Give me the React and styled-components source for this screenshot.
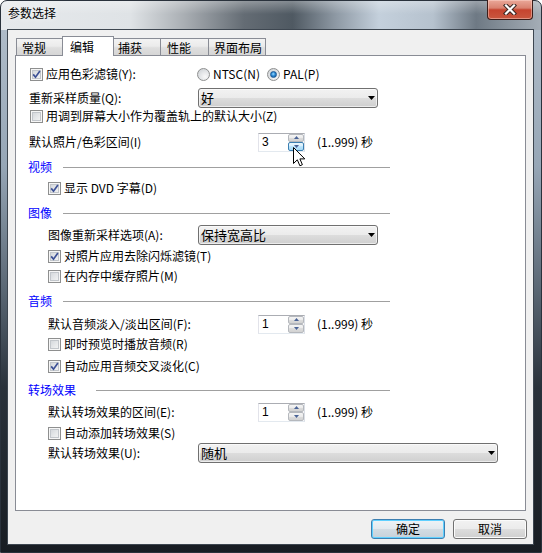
import styled, { createGlobalStyle } from "styled-components";

const GlobalStyle = createGlobalStyle`
  html, body {
    margin: 0;
    padding: 0;
    background: #ffffff;
  }

  body {
    font-family: "Noto Sans CJK SC", "Liberation Sans", sans-serif;
    font-size: 12px;
    color: #000000;
  }
`;

function CloseIcon() {
  return (
    <svg width="14" height="11" viewBox="0 0 14 11">
      <path d="M3 1.5 L11 9.5 M11 1.5 L3 9.5" stroke="#3a2622" strokeWidth="4.2" strokeLinecap="square" />
      <path d="M3 1.5 L11 9.5 M11 1.5 L3 9.5" stroke="#ffffff" strokeWidth="2.2" strokeLinecap="square" />
    </svg>
  );
}

function CheckIcon() {
  return (
    <svg width="9" height="9" viewBox="0 0 9 9">
      <path d="M1.2 4.4 L3.5 7.2 L7.9 1" fill="none" stroke="#3d5196" strokeWidth="1.7" />
    </svg>
  );
}

function ArrowDown() {
  return (
    <svg width="7" height="4" viewBox="0 0 7 4">
      <polygon points="0,0 7,0 3.5,4" fill="#000000" />
    </svg>
  );
}

function SpinArrow({ up }) {
  return (
    <svg width="5" height="3" viewBox="0 0 5 3">
      <polygon points={up ? "0,3 5,3 2.5,0" : "0,0 5,0 2.5,3"} fill="#4a6396" />
    </svg>
  );
}

function Cursor() {
  return (
    <StyledCursor width="13" height="20" viewBox="0 0 13 20">
      <path
        d="M0.5 0.5 V16.5 L4.3 12.8 L6.9 18.8 L9.4 17.7 L6.9 11.9 H11.8 Z"
        fill="#ffffff"
        stroke="#000000"
        strokeWidth="1"
      />
    </StyledCursor>
  );
}

function CheckItem({ checked, indent = 0, children }) {
  return (
    <StyledCheckItem $indent={indent}>
      <StyledBox>{checked && <CheckIcon />}</StyledBox>
      <span>{children}</span>
    </StyledCheckItem>
  );
}

function Radio({ checked, children }) {
  return (
    <StyledRadioOption>
      <StyledRadio $checked={checked} />
      <span>{children}</span>
    </StyledRadioOption>
  );
}

function Select({ width, children }) {
  return (
    <StyledSelect $width={width}>
      <span>{children}</span>
      <ArrowDown />
    </StyledSelect>
  );
}

function Spin({ value, hover }) {
  return (
    <StyledSpinWrap>
      <StyledSpin>
        <StyledSpinValue>{value}</StyledSpinValue>
        <StyledSpinButtons>
          <StyledSpinButton><SpinArrow up /></StyledSpinButton>
          <StyledSpinButton $hover={hover}><SpinArrow /></StyledSpinButton>
        </StyledSpinButtons>
        {hover && <Cursor />}
      </StyledSpin>
      <StyledRange>(1..999) 秒</StyledRange>
    </StyledSpinWrap>
  );
}

function Section({ title, gap, mt }) {
  return (
    <StyledSection $mt={mt}>
      <span>{title}</span>
      <StyledSectionLine $gap={gap} />
    </StyledSection>
  );
}

export default function App() {
  return (
    <>
      <GlobalStyle />
      <StyledWindow>
        <StyledTitleBar>
          <StyledTitle>参数选择</StyledTitle>
          <StyledCloseButton>
            <CloseIcon />
          </StyledCloseButton>
        </StyledTitleBar>

        <StyledClient>
          <StyledTabStrip>
            <StyledTab $width={47} $pad={5}>常规</StyledTab>
            <StyledTab $width={52} $pad={7} $active>编辑</StyledTab>
            <StyledTab $width={48} $pad={4}>捕获</StyledTab>
            <StyledTab $width={49} $pad={6}>性能</StyledTab>
            <StyledTab $width={58} $pad={5}>界面布局</StyledTab>
          </StyledTabStrip>

          <StyledPanel>
            <StyledFieldRow>
              <CheckItem checked>应用色彩滤镜(Y):</CheckItem>
              <StyledRadioGroup>
                <Radio>NTSC(N)</Radio>
                <Radio checked>PAL(P)</Radio>
              </StyledRadioGroup>
            </StyledFieldRow>
            <StyledFieldRow $h={20} $mt={6}>
              <StyledLabel>重新采样质量(Q):</StyledLabel>
              <Select width={180}>好</Select>
            </StyledFieldRow>
            <StyledCheckRow>
              <CheckItem>用调到屏幕大小作为覆盖轨上的默认大小(Z)</CheckItem>
            </StyledCheckRow>
            <StyledFieldRow $h={20} $mt={8}>
              <StyledLabel>默认照片/色彩区间(I)</StyledLabel>
              <Spin value="3" hover />
            </StyledFieldRow>

            <Section title="视频" gap={11} mt={7} />
            <StyledCheckRow $mt={5}>
              <CheckItem checked indent={18}>显示 DVD 字幕(D)</CheckItem>
            </StyledCheckRow>

            <Section title="图像" gap={11} mt={9} />
            <StyledFieldRow $h={20} $mt={4}>
              <StyledLabel $indent={19}>图像重新采样选项(A):</StyledLabel>
              <Select width={180}>保持宽高比</Select>
            </StyledFieldRow>
            <StyledCheckRow $mt={3}>
              <CheckItem checked indent={18}>对照片应用去除闪烁滤镜(T)</CheckItem>
            </StyledCheckRow>
            <StyledCheckRow $mt={4}>
              <CheckItem indent={18}>在内存中缓存照片(M)</CheckItem>
            </StyledCheckRow>

            <Section title="音频" gap={11} mt={9} />
            <StyledFieldRow $h={20} $mt={5}>
              <StyledLabel $indent={19}>默认音频淡入/淡出区间(F):</StyledLabel>
              <Spin value="1" />
            </StyledFieldRow>
            <StyledCheckRow $mt={2}>
              <CheckItem indent={18}>即时预览时播放音频(R)</CheckItem>
            </StyledCheckRow>
            <StyledCheckRow $mt={6}>
              <CheckItem checked indent={18}>自动应用音频交叉淡化(C)</CheckItem>
            </StyledCheckRow>

            <Section title="转场效果" gap={20} mt={8} />
            <StyledFieldRow $h={20} $mt={4}>
              <StyledLabel $indent={19}>默认转场效果的区间(E):</StyledLabel>
              <Spin value="1" />
            </StyledFieldRow>
            <StyledCheckRow $mt={3}>
              <CheckItem indent={18}>自动添加转场效果(S)</CheckItem>
            </StyledCheckRow>
            <StyledFieldRow $h={20} $mt={2}>
              <StyledLabel $indent={19}>默认转场效果(U):</StyledLabel>
              <Select width={300}>随机</Select>
            </StyledFieldRow>
          </StyledPanel>

          <StyledFooter>
            <StyledButton $default>确定</StyledButton>
            <StyledButton>取消</StyledButton>
          </StyledFooter>
        </StyledClient>
      </StyledWindow>
    </>
  );
}

const StyledWindow = styled.div`
  display: flex;
  flex-direction: column;
  width: 542px;
  height: 553px;
  box-sizing: border-box;
  padding: 0 7px 7px 6px;
  border: 1px solid #2a323c;
  border-radius: 7px 7px 0 0;
  background:
    linear-gradient(180deg, rgba(255, 255, 255, 0.3) 0%, rgba(255, 255, 255, 0) 45%) top / 100% 29px no-repeat,
    linear-gradient(90deg, #e6e9ec 0%, #dfe3e6 24%, #a9aeb3 34%, #646c74 45%, #4f5962 54%, #8e99a4 62%, #c4d0dc 70%, #b6c2ce 80%, #6e7984 88%, #8a949e 94%, #a4adb6 100%) top / 100% 29px no-repeat,
    linear-gradient(180deg, #b4c0cc 0%, #96a6b6 30%, #5b6875 52%, #2a323b 70%, #181d23 100%);
`;

const StyledTitleBar = styled.div`
  display: flex;
  justify-content: space-between;
  align-items: flex-start;
  flex: none;
  height: 28px;
`;

const StyledTitle = styled.span`
  margin: 4px 0 0 1px;
  line-height: 16px;
  color: #000000;
  text-shadow: 0 0 6px rgba(255, 255, 255, 0.9);
`;

const StyledCloseButton = styled.div`
  display: flex;
  align-items: center;
  justify-content: center;
  width: 46px;
  height: 20px;
  box-sizing: border-box;
  margin: -1px 1px 0 0;
  border: 1px solid #3c1d19;
  border-top: none;
  border-radius: 0 0 4px 4px;
  background: linear-gradient(180deg, #eaa899 0%, #d98270 42%, #c5442f 52%, #c9573f 100%);
  box-shadow: inset 0 0 0 1px rgba(255, 220, 210, 0.45);
`;

const StyledClient = styled.div`
  display: flex;
  flex-direction: column;
  flex: 1;
  padding: 6px 7px 0 7px;
  border: 1px solid #3d4650;
  background: #f0f0f0;
`;

const StyledTabStrip = styled.div`
  display: flex;
  align-items: flex-end;
  height: 19px;
  padding-left: 1px;
  flex: none;
`;

const StyledTab = styled.div`
  position: relative;
  z-index: ${({ $active }) => ($active ? 1 : 0)};
  width: ${({ $width }) => $width}px;
  height: ${({ $active }) => ($active ? 20 : 17)}px;
  box-sizing: border-box;
  margin-bottom: ${({ $active }) => ($active ? -1 : 0)}px;
  padding: ${({ $active }) => ($active ? 2 : 1)}px 0 0 ${({ $pad }) => $pad}px;
  line-height: 16px;
  overflow: hidden;
  border: 1px solid #898c95;
  border-bottom: none;
  background: ${({ $active }) =>
    $active ? "#ffffff" : "linear-gradient(180deg, #f3f3f3 0%, #ebebeb 45%, #dedede 55%, #d6d6d6 100%)"};

  & + & {
    margin-left: -1px;
  }
`;

const StyledPanel = styled.div`
  flex: none;
  height: 456px;
  box-sizing: border-box;
  padding: 10px 0 0 13px;
  border: 1px solid #898c95;
  background: #ffffff;
  white-space: nowrap;
`;

const StyledFieldRow = styled.div`
  display: grid;
  grid-template-columns: 169px auto;
  justify-content: start;
  align-items: center;
  height: ${({ $h }) => $h || 16}px;
  margin-top: ${({ $mt }) => $mt || 0}px;
  line-height: 16px;
`;

const StyledCheckRow = styled.div`
  display: flex;
  align-items: center;
  height: 16px;
  margin-top: ${({ $mt }) => $mt || 0}px;
  line-height: 16px;
`;

const StyledLabel = styled.span`
  padding-left: ${({ $indent }) => $indent || 0}px;
`;

const StyledCheckItem = styled.label`
  display: flex;
  align-items: center;
  gap: 3px;
  margin-left: 1px;
  padding-left: ${({ $indent }) => $indent}px;
`;

const StyledBox = styled.span`
  display: flex;
  align-items: center;
  justify-content: center;
  flex: none;
  width: 13px;
  height: 13px;
  box-sizing: border-box;
  border: 1px solid #8e8f8f;
  background: linear-gradient(135deg, #cdd1d6 0%, #e6e8ea 55%, #f8f8f8 100%);
  box-shadow: inset 0 0 0 1px #f6f6f6, inset 0 0 0 2px #c2c6cb;
`;

const StyledRadioGroup = styled.div`
  display: grid;
  grid-template-columns: 70px auto;
  margin-left: -1px;
`;

const StyledRadioOption = styled.label`
  display: flex;
  align-items: center;
  gap: 3px;
`;

const StyledRadio = styled.span`
  position: relative;
  flex: none;
  width: 13px;
  height: 13px;
  box-sizing: border-box;
  border: 1px solid #8e8f8f;
  border-radius: 50%;
  background: radial-gradient(circle at 65% 70%, #f9f9f9 0%, #e4e6e8 45%, #c8ccd0 100%);

  &::after {
    content: "";
    display: ${({ $checked }) => ($checked ? "block" : "none")};
    position: absolute;
    left: 2px;
    top: 2px;
    width: 7px;
    height: 7px;
    box-sizing: border-box;
    border-radius: 50%;
    border: 1px solid #1b5a96;
    background: radial-gradient(circle at 45% 40%, #9adcff 0%, #2c8ad6 45%, #0f4f8f 100%);
  }
`;

const StyledSelect = styled.div`
  display: flex;
  align-items: center;
  justify-content: space-between;
  width: ${({ $width }) => $width}px;
  height: 20px;
  box-sizing: border-box;
  padding: 0 2px 0 2px;
  border: 1px solid #707070;
  border-radius: 3px;
  background: linear-gradient(180deg, #f2f2f2 0%, #ebebeb 50%, #dddddd 50%, #cfcfcf 100%);
  box-shadow: inset 0 0 0 1px rgba(255, 255, 255, 0.6);
  font-size: 13px;
`;

const StyledSpinWrap = styled.div`
  display: flex;
  align-items: center;
  margin-left: 60px;
`;

const StyledSpin = styled.div`
  position: relative;
  display: flex;
  width: 47px;
  height: 19px;
  box-sizing: border-box;
  border: 1px solid;
  border-color: #abadb3 #dbdfe6 #e3e9ef #e2e3ea;
  background: #ffffff;
`;

const StyledSpinValue = styled.span`
  flex: 1;
  padding-left: 3px;
  line-height: 17px;
  font-family: "Liberation Sans", sans-serif;
`;

const StyledSpinButtons = styled.div`
  display: flex;
  flex-direction: column;
  width: 16px;
`;

const StyledSpinButton = styled.div`
  display: flex;
  align-items: center;
  justify-content: center;
  flex: 1;
  box-sizing: border-box;
  border: 1px solid ${({ $hover }) => ($hover ? "#3c7fb1" : "#b5b8bd")};
  border-radius: 2px;
  background: ${({ $hover }) =>
    $hover
      ? "linear-gradient(180deg, #eaf6fd 0%, #d9f0fc 50%, #bee6fd 50%, #a7d9f5 100%)"
      : "linear-gradient(180deg, #f4f4f4 0%, #ebebeb 50%, #dddddd 50%, #d2d2d2 100%)"};
`;

const StyledCursor = styled.svg`
  position: absolute;
  left: 34px;
  top: 13px;
  z-index: 2;
`;

const StyledRange = styled.span`
  margin-left: 12px;
`;

const StyledSection = styled.div`
  display: flex;
  align-items: center;
  width: 362px;
  height: 16px;
  margin-top: ${({ $mt }) => $mt || 0}px;
  margin-left: -1px;
  line-height: 16px;
  color: #0000ff;
`;

const StyledSectionLine = styled.span`
  flex: 1;
  height: 1px;
  margin-left: ${({ $gap }) => $gap}px;
  background: #a0a0a0;
`;

const StyledFooter = styled.div`
  display: flex;
  justify-content: flex-end;
  gap: 8px;
  margin: 8px -1px 0 0;
`;

const StyledButton = styled.button`
  width: 74px;
  height: 20px;
  box-sizing: border-box;
  padding: 0;
  font: inherit;
  font-size: 12px;
  line-height: 16px;
  color: #000000;
  border: 1px solid ${({ $default }) => ($default ? "#3c7fb1" : "#707070")};
  border-radius: 3px;
  background: ${({ $default }) =>
    $default
      ? "linear-gradient(180deg, #eef3f6 0%, #e2e9ee 50%, #d3dce3 50%, #c6d1da 100%)"
      : "linear-gradient(180deg, #f2f2f2 0%, #ebebeb 50%, #dddddd 50%, #cfcfcf 100%)"};
  box-shadow: inset 0 0 0 1px ${({ $default }) => ($default ? "#5fd0ff" : "#fbfbfb")};
`;
